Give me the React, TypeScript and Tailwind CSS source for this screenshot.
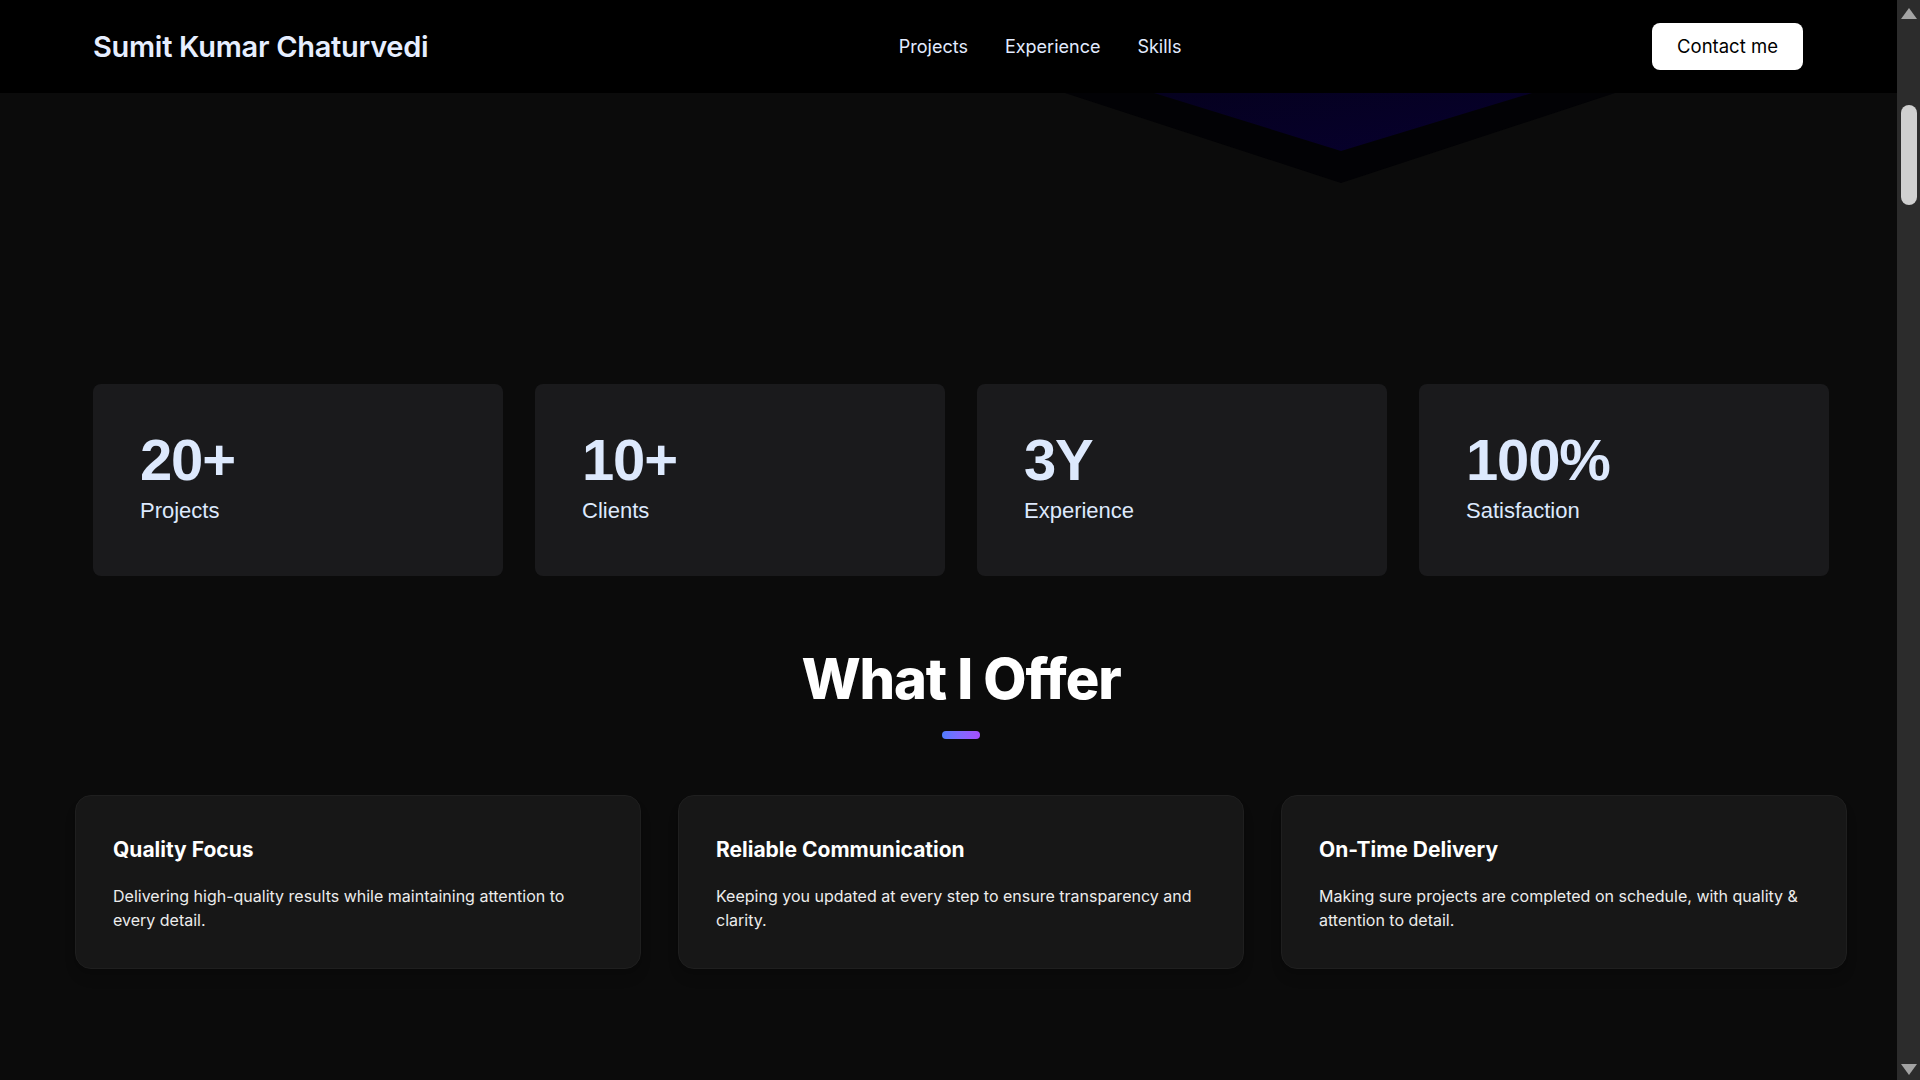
import React from "react";

const stats = [
  { value: "20+", label: "Projects" },
  { value: "10+", label: "Clients" },
  { value: "3Y", label: "Experience" },
  { value: "100%", label: "Satisfaction" },
];

const offers = [
  {
    title: "Quality Focus",
    desc: "Delivering high-quality results while maintaining attention to every detail.",
  },
  {
    title: "Reliable Communication",
    desc: "Keeping you updated at every step to ensure transparency and clarity.",
  },
  {
    title: "On-Time Delivery",
    desc: "Making sure projects are completed on schedule, with quality & attention to detail.",
  },
];

export default function App() {
  return (
    <div
      className="relative flex h-[1080px] w-[1920px] overflow-hidden bg-[#0b0b0b]"
      style={{ fontFamily: "Inter, 'Noto Sans', sans-serif" }}
    >
      <main className="relative flex w-[1897px] flex-col">
        {/* decorative chevron from the hero behind the nav */}
        <svg
          className="pointer-events-none absolute left-0 top-[93px]"
          width="1897"
          height="100"
          viewBox="0 0 1897 100"
        >
          <defs>
            <linearGradient id="inner" x1="0" y1="0" x2="1" y2="1">
              <stop offset="0" stopColor="#05011f" />
              <stop offset="1" stopColor="#07002e" />
            </linearGradient>
          </defs>
          <polygon points="1065,0 1615,0 1341,90" fill="#020205" />
          <polygon points="1154,0 1532,0 1341,58" fill="url(#inner)" />
        </svg>

        <header className="relative z-10 flex h-[93px] items-center justify-between bg-black pl-[93px] pr-[94px]">
          <div className="text-[29px] font-semibold tracking-[-0.01em] text-[#e6eeff]">
            Sumit Kumar Chaturvedi
          </div>
          <nav className="flex items-center gap-[37px] text-[18px] text-[#e2ebff]">
            <span>Projects</span>
            <span>Experience</span>
            <span>Skills</span>
          </nav>
          <button className="flex h-[47px] w-[151px] items-center justify-center rounded-lg bg-white text-[18.5px] text-black">
            Contact me
          </button>
        </header>

        <section className="ml-[93px] mt-[291px] grid w-[1736px] grid-cols-4 gap-[32px]">
          {stats.map((s) => (
            <div
              key={s.label}
              className="h-[192px] rounded-lg bg-[#1a1a1c] pl-[47px] pt-[47px] text-[#dde9fd]"
              style={{ fontFamily: "'Liberation Sans', Arial, sans-serif" }}
            >
              <div className="text-[58px] font-bold leading-none tracking-[-0.02em]">{s.value}</div>
              <div className="mt-2 text-[22px] leading-[28px]">{s.label}</div>
            </div>
          ))}
        </section>

        <section className="ml-[75px] mt-[75px] flex w-[1772px] flex-col items-center">
          <h2 className="text-[56px] font-extrabold leading-none tracking-[-0.02em] text-white">
            What I Offer
          </h2>
          <div className="mt-6 h-2 w-[38px] rounded-full bg-gradient-to-r from-[#4d7cff] to-[#a64dfb]" />
        </section>

        <section className="ml-[75px] mt-14 grid w-[1772px] grid-cols-3 gap-[37px]">
          {offers.map((o) => (
            <div
              key={o.title}
              className="h-[174px] rounded-2xl border border-[#1f1f1f] bg-[#171717] px-[37px] pt-10 shadow-lg"
            >
              <h3 className="text-[21px] font-bold leading-[28px] text-white">{o.title}</h3>
              <p className="mt-5 text-[16px] leading-[24px] text-[#ececec]">{o.desc}</p>
            </div>
          ))}
        </section>
      </main>

      {/* scrollbar */}
      <div className="flex w-[23px] flex-col items-center bg-[#2c2c2c]">
        <div className="mt-[8px] h-0 w-0 border-x-[8px] border-b-[11px] border-x-transparent border-b-[#a3a3a3]" />
        <div className="mt-[86px] h-[100px] w-[16px] rounded-full bg-[#d0d0d0]" />
        <div className="flex-1" />
        <div className="mb-[5px] h-0 w-0 border-x-[8px] border-t-[11px] border-x-transparent border-t-[#a3a3a3]" />
      </div>
    </div>
  );
}
